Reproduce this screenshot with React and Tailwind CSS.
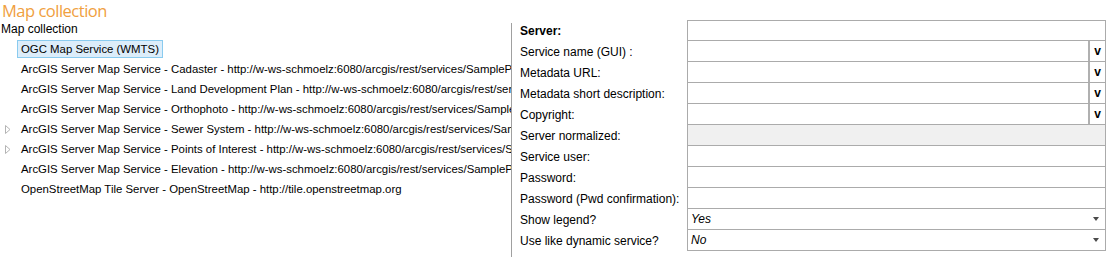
import { Fragment } from "react";

const services = [
    { label: "OGC Map Service (WMTS)", selected: true },
    { label: "ArcGIS Server Map Service - Cadaster - http://w-ws-schmoelz:6080/arcgis/rest/services/SampleProject/Cadaster/MapServer" },
    { label: "ArcGIS Server Map Service - Land Development Plan - http://w-ws-schmoelz:6080/arcgis/rest/services/SampleProject/LandDevelopmentPlan/MapServer" },
    { label: "ArcGIS Server Map Service - Orthophoto - http://w-ws-schmoelz:6080/arcgis/rest/services/SampleProject/Orthophoto/MapServer" },
    { label: "ArcGIS Server Map Service - Sewer System - http://w-ws-schmoelz:6080/arcgis/rest/services/SampleProject/SewerSystem/MapServer", expandable: true },
    { label: "ArcGIS Server Map Service - Points of Interest - http://w-ws-schmoelz:6080/arcgis/rest/services/SampleProject/POI/MapServer", expandable: true },
    { label: "ArcGIS Server Map Service - Elevation - http://w-ws-schmoelz:6080/arcgis/rest/services/SampleProject/Elevation/MapServer" },
    { label: "OpenStreetMap Tile Server - OpenStreetMap - http://tile.openstreetmap.org" },
];

const fields = [
    { label: "Server:", bold: true },
    { label: "Service name (GUI) :", button: true },
    { label: "Metadata URL:", button: true },
    { label: "Metadata short description:", button: true },
    { label: "Copyright:", button: true },
    { label: "Server normalized:", readOnly: true },
    { label: "Service user:" },
    { label: "Password:" },
    { label: "Password (Pwd confirmation):" },
    { label: "Show legend?", select: "Yes" },
    { label: "Use like dynamic service?", select: "No" },
];

function Expander() {
    return (
        <svg width="6" height="9" viewBox="0 0 6 9" className="shrink-0">
            <path d="M0.5 0.5 L5 4.5 L0.5 8.5 Z" fill="none" stroke="#b4b4b4" strokeWidth="1" />
        </svg>
    );
}

function FieldInput({ field, first }) {
    const edge = `flex h-[21px] border-x border-b border-[#ababab] ${first ? "border-t" : ""}`;
    if (field.select) {
        return (
            <div className={`${edge} items-center bg-white pl-[3px] pr-[6px]`}>
                <span className="flex-1 italic">{field.select}</span>
                <svg width="6" height="4" viewBox="0 0 6 4">
                    <path d="M0 0 H6 L3 4 Z" fill="#4a4a4a" />
                </svg>
            </div>
        );
    }
    return (
        <div className={`${edge} ${field.readOnly ? "bg-[#f0f0f0]" : "bg-white"}`}>
            <div className="flex-1" />
            {field.button && (
                <div className="flex w-[17px] items-center justify-center border-l-2 border-[#b0b0b0] text-[12px] font-bold">
                    v
                </div>
            )}
        </div>
    );
}

export default function App() {
    return (
        <div className="h-[257px] w-[1108px] overflow-hidden bg-white text-[12px] text-black" style={{ fontFamily: '"Liberation Sans", Arial, sans-serif' }}>
            <div className="h-[20px] pl-[2px]">
                <h1
                    className="text-[16.5px] leading-[21px] font-normal tracking-[-0.03em] text-[#f0a040]"
                    style={{ fontFamily: '"Open Sans", sans-serif' }}
                >
                    Map collection
                </h1>
            </div>
            <div className="flex h-[237px]">
                <div className="w-[511px] shrink-0 overflow-hidden">
                    <div className="h-[19px] pl-[1px] leading-[19px]">Map collection</div>
                    <ul className="text-[11.4px]">
                        {services.map((s) => (
                            <li key={s.label} className="flex h-[20px] items-center">
                                <div className="flex w-[17px] shrink-0 justify-center pr-[2px]">{s.expandable && <Expander />}</div>
                                <span
                                    className={`shrink-0 whitespace-nowrap border px-[3px] leading-[16px] ${
                                        s.selected ? "border-[#8acbef] bg-[#dcedfa]" : "border-transparent"
                                    }`}
                                >
                                    {s.label}
                                </span>
                            </li>
                        ))}
                    </ul>
                </div>
                <div className="mt-[3px] w-px bg-[#a0a0a0]" />
                <div className="grid flex-1 grid-cols-[175px_419px] content-start">
                    {fields.map((f, i) => (
                        <Fragment key={f.label}>
                            <div className={`flex h-[21px] items-center pl-[8px] ${f.bold ? "font-bold" : ""}`}>{f.label}</div>
                            <FieldInput field={f} first={i === 0} />
                        </Fragment>
                    ))}
                </div>
            </div>
        </div>
    );
}
